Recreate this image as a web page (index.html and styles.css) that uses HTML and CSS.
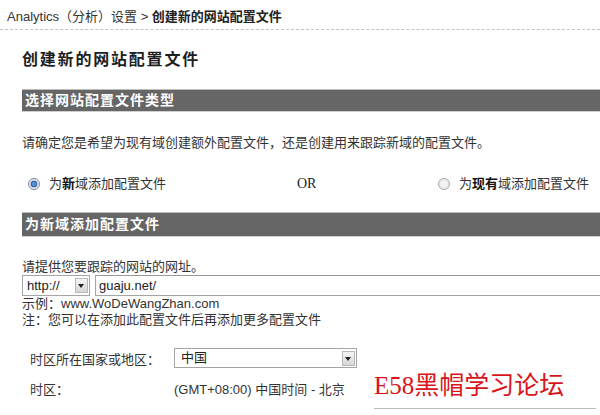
FILE: index.html
```html
<!DOCTYPE html>
<html lang="zh-CN">
<head>
<meta charset="utf-8">
<title>创建新的网站配置文件</title>
<link rel="stylesheet" href="styles.css">
</head>
<body>
<div class="crumb">Analytics（分析）设置 &gt; <b>创建新的网站配置文件</b></div>
<div class="page">
  <h1 class="title">创建新的网站配置文件</h1>
  <div class="bar bar1">选择网站配置文件类型</div>
  <p class="para">请确定您是希望为现有域创建额外配置文件，还是创建用来跟踪新域的配置文件。</p>
  <div class="radios">
    <label class="opt"><span class="radio checked"></span>为<b>新</b>域添加配置文件</label>
    <span class="or">OR</span>
    <label class="opt"><span class="radio"></span>为<b>现有</b>域添加配置文件</label>
  </div>
  <div class="bar bar2">为新域添加配置文件</div>
  <div class="urllabel">请提供您要跟踪的网站的网址。</div>
  <div class="urlrow">
    <span class="select proto"><span class="val">http://</span><span class="arrow"></span></span>
    <span class="input">guaju.net/</span>
  </div>
  <div class="hint">示例：www.WoDeWangZhan.com</div>
  <div class="hint">注：您可以在添加此配置文件后再添加更多配置文件</div>
  <div class="tzrow tz1">
    <span class="tzlabel">时区所在国家或地区：</span>
    <span class="select country"><span class="val">中国</span><span class="arrow"></span></span>
  </div>
  <div class="tzrow tz2">
    <span class="tzlabel">时区：</span>
    <span class="tzval">(GMT+08:00) 中国时间 - 北京</span>
  </div>
</div>
<div class="watermark">E58黑帽学习论坛</div>
</body>
</html>
```
FILE: styles.css
```css
html, body {
  margin: 0;
  padding: 0;
  background: #fff;
  overflow: hidden;
}
body {
  width: 600px;
  height: 415px;
  position: relative;
  font-family: "Liberation Sans", "Noto Sans CJK SC", sans-serif;
  font-size: 13px;
  color: #2a2a2a;
}
.crumb {
  height: 30px;
  box-sizing: border-box;
  padding: 9px 0 0 7px;
  line-height: 16px;
  font-size: 13px;
  color: #333;
  border-bottom: 1px dashed #c4c4c4;
}
.crumb b { color: #222; }
.page {
  padding-left: 22px;
}
.title {
  margin: 20px 0 0;
  font-size: 16px;
  line-height: 20px;
  font-weight: bold;
  letter-spacing: 1.8px;
  color: #1e1e1e;
}
.bar {
  background: #666;
  color: #fff;
  font-weight: bold;
  font-size: 14px;
  letter-spacing: 1px;
  padding-left: 3px;
  box-shadow: 0 1px 0 #d0d0d0, 0 -1px 0 #bdbdbd;
}
.bar1 {
  margin-top: 20px;
  height: 21px;
  line-height: 21px;
}
.para {
  margin: 23px 0 0;
  line-height: 18px;
  color: #333;
}
.radios {
  margin-top: 23px;
  height: 18px;
  line-height: 18px;
  display: grid;
  grid-template-columns: 269px 141px 1fr;
  padding-left: 6px;
}
.opt {
  display: flex;
  align-items: center;
  color: #333;
  white-space: nowrap;
}
.opt b { color: #111; }
.radio {
  width: 10px;
  height: 10px;
  border-radius: 50%;
  border: 1px solid #a9a9a9;
  background: radial-gradient(circle, #f4f4f4 0 40%, #dcdcdc 100%);
  margin-right: 9px;
  flex: none;
}
.radio.checked {
  border-color: #7f8c99;
  background: radial-gradient(circle, #5a8fd0 0 28%, #1e4f94 42%, #d9e2ec 52%, #eef2f6 100%);
}
.or {
  font-family: "Liberation Serif", serif;
  font-size: 14px;
  color: #222;
}
.bar2 {
  margin-top: 20px;
  height: 23px;
  line-height: 23px;
}
.urllabel {
  margin-top: 23px;
  line-height: 16px;
  color: #333;
}
.urlrow {
  display: flex;
  height: 21px;
  margin-right: -20px;
}
.select {
  display: flex;
  align-items: center;
  box-sizing: border-box;
  border: 1px solid #a5a5a5;
  background: #fff;
  color: #222;
}
.select .val {
  flex: 1;
  padding-left: 4px;
  line-height: 18px;
}
.arrow {
  width: 13px;
  height: 15px;
  margin-right: 1px;
  box-sizing: border-box;
  border: 1px solid #b8b8b8;
  background: linear-gradient(#f6f6f6, #d6d6d6);
  position: relative;
  flex: none;
}
.arrow::after {
  content: "";
  position: absolute;
  left: 2px;
  top: 5px;
  border-left: 3.5px solid transparent;
  border-right: 3.5px solid transparent;
  border-top: 4px solid #222;
}
.proto {
  width: 68px;
  height: 21px;
}
.input {
  flex: 1;
  margin-left: 5px;
  box-sizing: border-box;
  height: 21px;
  border: 1px solid #a5a5a5;
  border-top-color: #999;
  padding-left: 3px;
  line-height: 19px;
  color: #222;
}
.hint {
  line-height: 16px;
  color: #333;
}
.tzrow {
  display: flex;
  align-items: center;
  padding-left: 8px;
  color: #333;
}
.tz1 {
  margin-top: 20px;
  height: 20px;
}
.tz2 {
  margin-top: 12px;
  height: 16px;
}
.tzlabel {
  width: 144px;
  flex: none;
}
.country {
  width: 183px;
  height: 20px;
}
.country .val { padding-left: 6px; }
.tzval { color: #333; }
.watermark {
  position: absolute;
  left: 374px;
  top: 371px;
  width: 222px;
  height: 37px;
  border-bottom: 1px solid #bdbdbd;
  font-family: "Liberation Serif", "Noto Sans CJK SC", serif;
  font-size: 25px;
  line-height: 30px;
  color: #d9141b;
  white-space: nowrap;
}
```
